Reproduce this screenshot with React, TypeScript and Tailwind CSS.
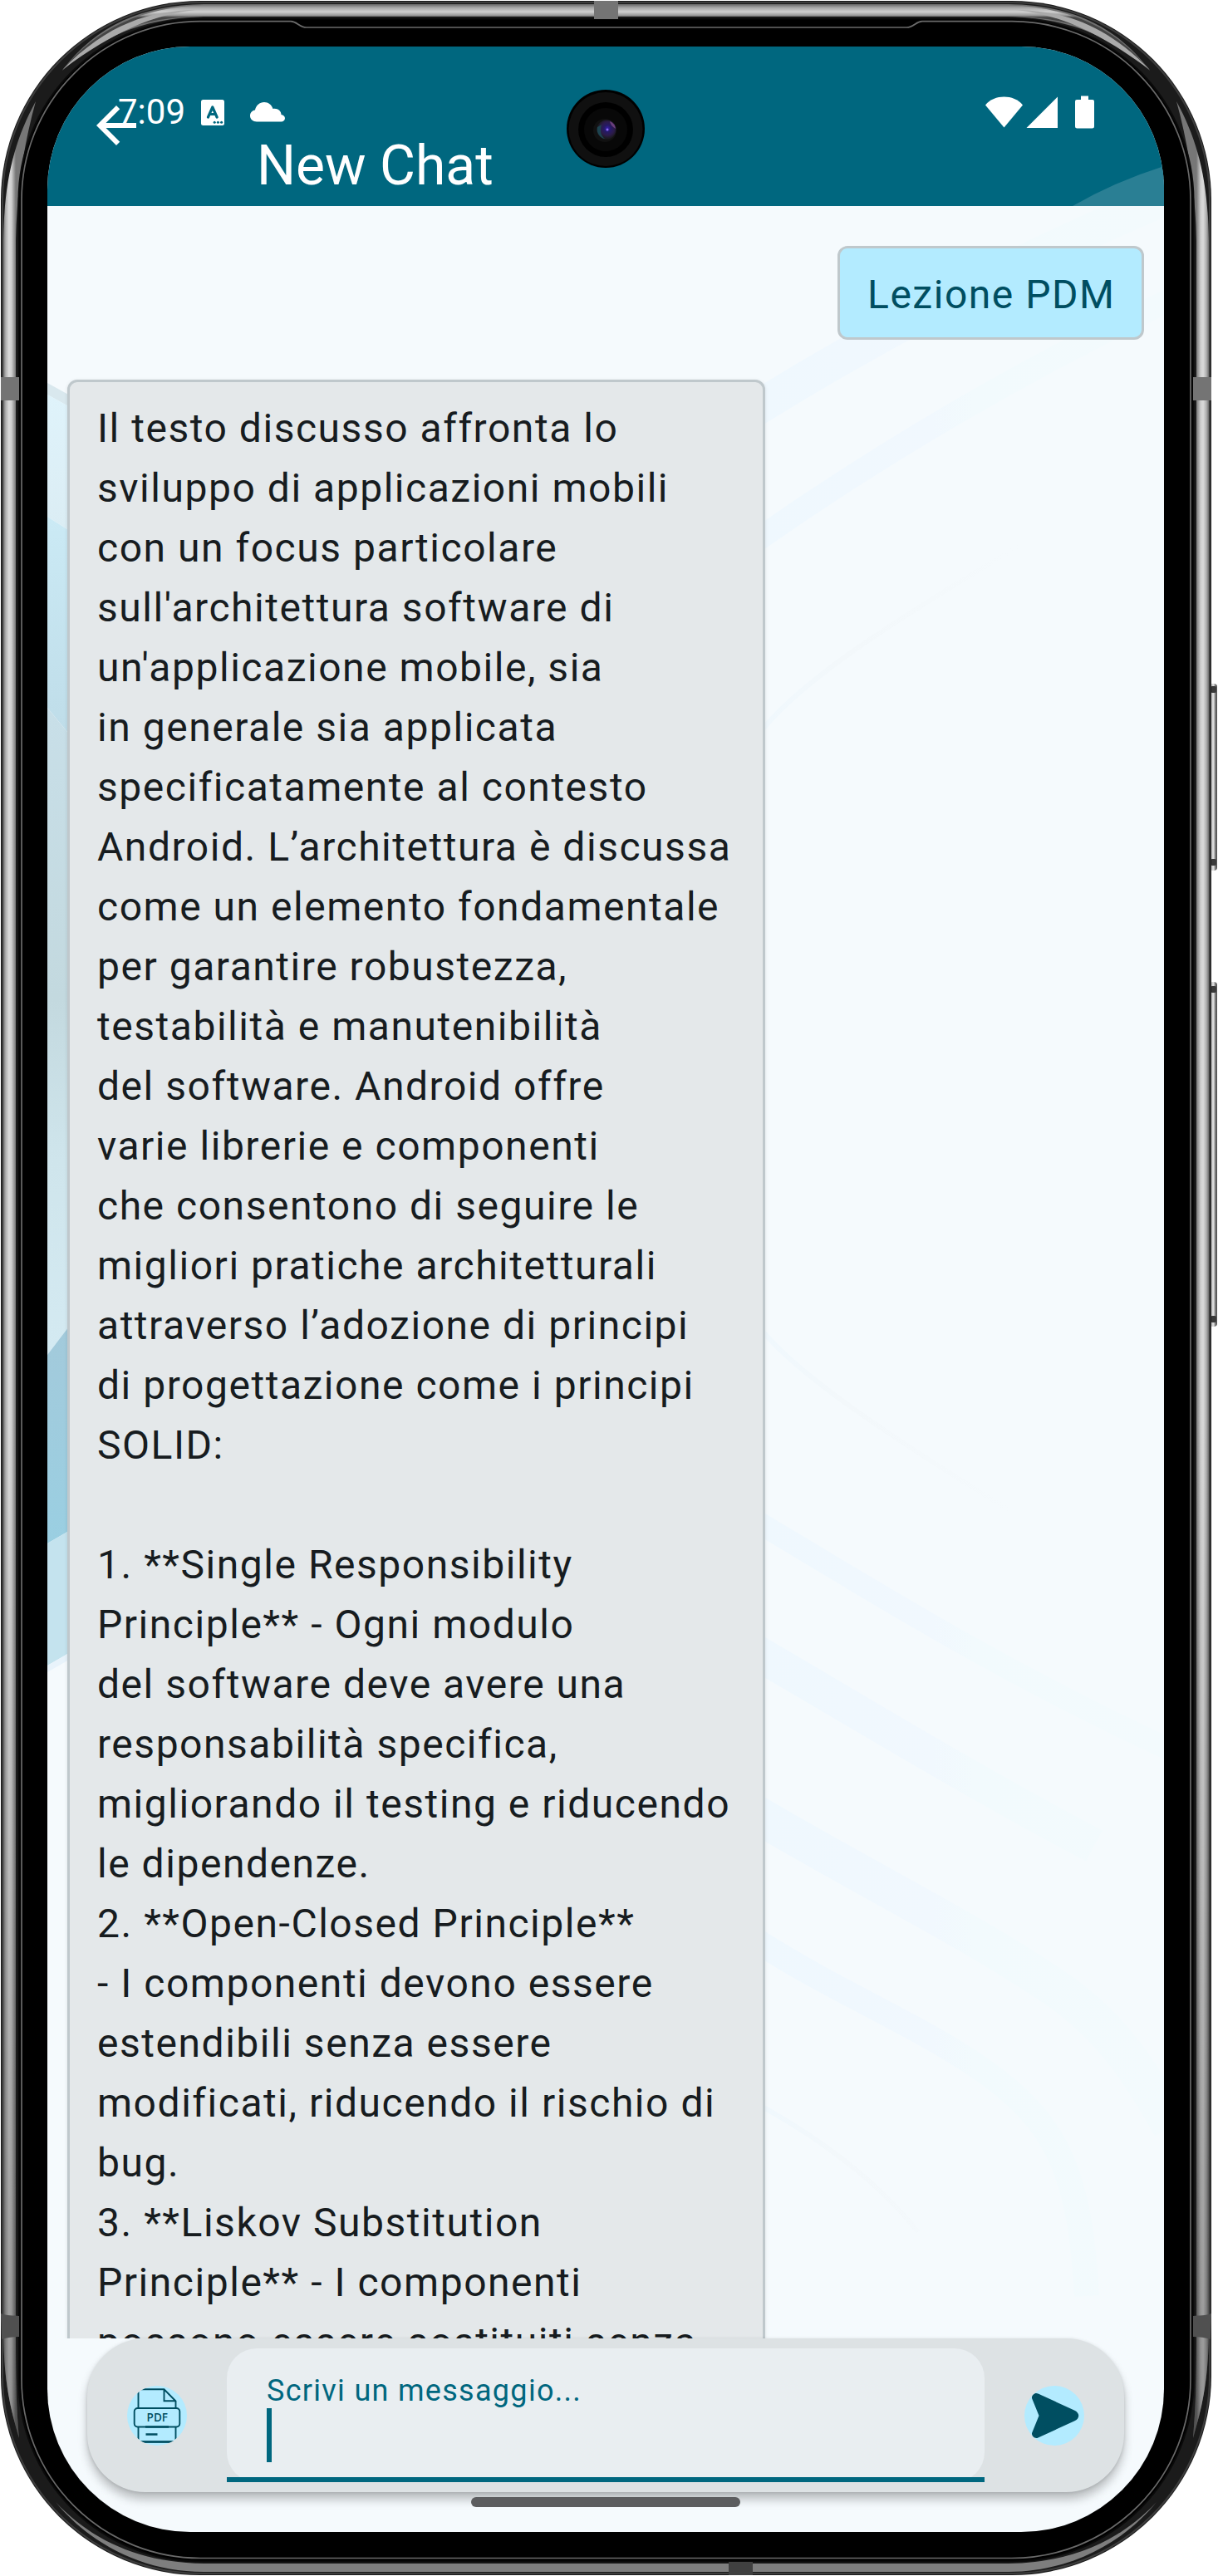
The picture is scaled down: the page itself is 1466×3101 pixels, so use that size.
import React from "react";

const lines = [
  "Il testo discusso affronta lo",
  "sviluppo di applicazioni mobili",
  "con un focus particolare",
  "sull'architettura software di",
  "un'applicazione mobile, sia",
  "in generale sia applicata",
  "specificatamente al contesto",
  "Android. L’architettura è discussa",
  "come un elemento fondamentale",
  "per garantire robustezza,",
  "testabilità e manutenibilità",
  "del software. Android offre",
  "varie librerie e componenti",
  "che consentono di seguire le",
  "migliori pratiche architetturali",
  "attraverso l’adozione di principi",
  "di progettazione come i principi",
  "SOLID:",
  "",
  "1. **Single Responsibility",
  "Principle** - Ogni modulo",
  "del software deve avere una",
  "responsabilità specifica,",
  "migliorando il testing e riducendo",
  "le dipendenze.",
  "2. **Open-Closed Principle**",
  "- I componenti devono essere",
  "estendibili senza essere",
  "modificati, riducendo il rischio di",
  "bug.",
  "3. **Liskov Substitution",
  "Principle** - I componenti",
  "possono essere sostituiti senza",
];

/* Metal body, bezel and side buttons of the handset. */
function PhoneFrame() {
  return (
    <svg className="absolute inset-0" width="1466" height="3101" viewBox="0 0 1466 3101" fill="none">
      <defs>
        <linearGradient id="button" x1="0" x2="1">
          <stop offset="0" stopColor="#b0b0b0" />
          <stop offset="0.5" stopColor="#dcdcdc" />
          <stop offset="0.75" stopColor="#8a8a8a" />
          <stop offset="0.9" stopColor="#3a3a3a" />
          <stop offset="1" stopColor="#808080" />
        </linearGradient>
        <linearGradient id="left" x1="4" x2="19" y1="0" y2="0" gradientUnits="userSpaceOnUse">
          <stop offset="0" stopColor="#6e6e6e" />
          <stop offset="0.2" stopColor="#b0b0b0" />
          <stop offset="0.45" stopColor="#dadada" />
          <stop offset="0.65" stopColor="#cfcfcf" />
          <stop offset="1" stopColor="#777" />
        </linearGradient>
        <linearGradient id="right" x1="1455" x2="1440" y1="0" y2="0" gradientUnits="userSpaceOnUse">
          <stop offset="0" stopColor="#6e6e6e" />
          <stop offset="0.2" stopColor="#b0b0b0" />
          <stop offset="0.45" stopColor="#dadada" />
          <stop offset="0.65" stopColor="#cfcfcf" />
          <stop offset="1" stopColor="#777" />
        </linearGradient>
        <linearGradient id="top" x1="0" x2="0" y1="4" y2="21" gradientUnits="userSpaceOnUse">
          <stop offset="0" stopColor="#555" />
          <stop offset="0.3" stopColor="#a5a5a5" />
          <stop offset="0.6" stopColor="#d0d0d0" />
          <stop offset="0.85" stopColor="#999" />
          <stop offset="1" stopColor="#444" />
        </linearGradient>
        <linearGradient id="shade" x1="0" x2="0" y1="1700" y2="3000" gradientUnits="userSpaceOnUse">
          <stop offset="0" stopColor="#000" stopOpacity="0" />
          <stop offset="1" stopColor="#000" stopOpacity="0.33" />
        </linearGradient>
        <filter id="soft" x="-0.05" y="-0.05" width="1.1" height="1.1">
          <feGaussianBlur stdDeviation="0.7" />
        </filter>
      </defs>

      <rect x="1456" y="823" width="9" height="225" rx="4" fill="url(#button)" />
      <rect x="1457" y="826" width="7" height="8" rx="2" fill="#3a3a3a" />
      <rect x="1457" y="1034" width="7" height="8" rx="2" fill="#3a3a3a" />
      <rect x="1456" y="1182" width="9" height="415" rx="4" fill="url(#button)" />
      <rect x="1457" y="1187" width="7" height="8" rx="2" fill="#3a3a3a" />
      <rect x="1457" y="1584" width="7" height="8" rx="2" fill="#3a3a3a" />

      <rect x="1" y="1" width="1457" height="3099" rx="240" fill="#1b1b1b" />
      <rect x="3" y="3" width="1453" height="3095" rx="238" stroke="#3d3d3d" strokeWidth="2" />

      <g filter="url(#soft)">
        <path d="M75 85C116 30 172 6 245 5H1214C1287 6 1343 30 1384 85C1340 47 1292 22 1214 20H245C167 22 119 47 75 85Z" fill="#6f6f6f" />
        <path d="M75 85C116 33 172 9 245 6H1214C1287 9 1343 33 1384 85C1340 42 1292 20 1214 20H245C167 20 119 42 75 85Z" fill="url(#top)" />
        <path d="M75 84C130 28 180 13 235 12C185 18 140 36 75 84ZM1384 84C1329 28 1279 13 1224 12C1274 18 1319 36 1384 84Z" fill="#aaa" />
        <path d="M43 122C18 168 5 215 4 290V2810C5 2870 13 2900 23 2935C20 2900 19 2870 19 2810V290C20 235 27 180 43 122Z" fill="url(#left)" />
        <path d="M1416 122C1441 168 1454 215 1455 290V2810C1454 2870 1446 2900 1436 2935C1439 2900 1440 2870 1440 2810V290C1439 235 1432 180 1416 122Z" fill="url(#right)" />
        <path d="M43 122C18 168 5 215 4 290V2810C5 2870 13 2900 23 2935C20 2900 19 2870 19 2810V290C20 235 27 180 43 122ZM1416 122C1441 168 1454 215 1455 290V2810C1454 2870 1446 2900 1436 2935C1439 2900 1440 2870 1440 2810V290C1439 235 1432 180 1416 122Z" fill="url(#shade)" />
        <path d="M67 3012C108 3062 172 3096 245 3096H1214C1287 3096 1351 3062 1392 3012C1350 3057 1292 3085 1214 3086H245C167 3085 109 3057 67 3012Z" fill="#7e7e7e" />
      </g>

      <rect x="23" y="23" width="1413" height="3061" rx="218" fill="#000" />
      <rect x="22.5" y="22.5" width="1414" height="3061" rx="218.5" stroke="#0a0a0a" strokeWidth="2" />
      <path
        d="M241 25.7H350C358 26 360 33 369 33H1091C1100 33 1102 26 1110 25.7H1218A215 215 0 0 1 1433 241V2864A215 215 0 0 1 1218 3079.5H241A215 215 0 0 1 26 2864V241A215 215 0 0 1 241 25.7Z"
        stroke="#6a6a6a"
        strokeWidth="1.7"
      />

      <path d="M1 454H23V482H1ZM1436 454H1458V482H1436Z" fill="#747474" />
      <path d="M1 2785C8 2788 16 2787 23 2788V2813C16 2813 8 2814 2 2816ZM1458 2785C1451 2788 1443 2787 1436 2788V2813C1443 2813 1451 2814 1457 2816Z" fill="#505050" />
      <path d="M715 1H744V23H715Z" fill="#747474" />
      <path d="M877 3084H906V3100H877Z" fill="#404040" />
    </svg>
  );
}

/* Decorative wallpaper behind the conversation. */
function Wallpaper() {
  return (
    <svg className="absolute inset-0" width="1344" height="2992" viewBox="57 56 1344 2992" fill="none">
      <defs>
        <linearGradient id="w1" x1="0" x2="0" y1="475" y2="637" gradientUnits="userSpaceOnUse">
          <stop stopColor="#dff3fb" />
          <stop offset="1" stopColor="#dbedf4" />
        </linearGradient>
        <linearGradient id="w2" x1="0" x2="0" y1="622" y2="880" gradientUnits="userSpaceOnUse">
          <stop stopColor="#cbeaf5" />
          <stop offset="1" stopColor="#bfdde9" />
        </linearGradient>
        <linearGradient id="w3" x1="0" x2="0" y1="852" y2="1630" gradientUnits="userSpaceOnUse">
          <stop stopColor="#c8dfe8" />
          <stop offset="0.45" stopColor="#c3d9df" />
          <stop offset="0.7" stopColor="#cfe5ec" />
          <stop offset="1" stopColor="#d4eaf2" />
        </linearGradient>
        <linearGradient id="w4" x1="0" x2="0" y1="1600" y2="1858" gradientUnits="userSpaceOnUse">
          <stop stopColor="#a3cadb" />
          <stop offset="1" stopColor="#9acfe2" />
        </linearGradient>
        <linearGradient id="fade" x1="921" x2="1401" y1="0" y2="0" gradientUnits="userSpaceOnUse">
          <stop stopColor="#eff8fe" />
          <stop offset="0.42" stopColor="#f1f8fe" />
          <stop offset="0.52" stopColor="#f2fafd" />
          <stop offset="1" stopColor="#f3fafd" />
        </linearGradient>
        <linearGradient id="thin" x1="921" x2="1230" y1="0" y2="0" gradientUnits="userSpaceOnUse">
          <stop stopColor="#f0f8fd" />
          <stop offset="0.3" stopColor="#f3f8fb" />
          <stop offset="1" stopColor="#f5fafd" />
        </linearGradient>
      </defs>
      <path d="M57 461L95 482V496L57 475Z" fill="#d9e8ee" />
      <path d="M57 475L95 496V646L57 622Z" fill="url(#w1)" />
      <path d="M57 622L95 646V898L57 852Z" fill="url(#w2)" />
      <path d="M57 852L95 898V1581L57 1631Z" fill="url(#w3)" />
      <path d="M57 1631L95 1581V1836L57 1858Z" fill="url(#w4)" />
      <path d="M57 1858L95 1836V1983L57 2005Z" fill="#c4e3ee" />
      <path d="M57 2005L95 1983V1991L57 2013Z" fill="#e8f3fb" />
      <g stroke="url(#fade)">
        <path d="M910 492C1050 405 1200 325 1410 235" strokeWidth="42" />
        <path d="M910 651C1040 560 1200 460 1410 360" strokeWidth="28" />
        <path d="M910 1831C1050 1915 1210 2015 1410 2107" strokeWidth="27" />
        <path d="M910 1989C1040 2065 1180 2150 1317 2222" strokeWidth="42" />
        <path d="M910 2184C1060 2272 1180 2330 1280 2400C1340 2445 1370 2490 1410 2560" strokeWidth="46" />
        <path d="M910 2336C1010 2400 1100 2435 1180 2490C1275 2555 1300 2620 1308 2764" strokeWidth="30" />
      </g>
      <g stroke="url(#thin)" strokeWidth="6">
        <path d="M910 888C960 820 1080 745 1230 655" />
        <path d="M910 1592C950 1650 1080 1735 1215 1818" />
        <path d="M910 2532C990 2575 1060 2630 1105 2687" />
      </g>
    </svg>
  );
}

function Camera() {
  return (
    <svg className="absolute left-[625px] top-[52px]" width="94" height="94" viewBox="0 0 94 94">
      <defs>
        <radialGradient id="lens" cx="0.55" cy="0.45" r="0.5">
          <stop offset="0" stopColor="#3a1fb0" />
          <stop offset="0.35" stopColor="#251a66" />
          <stop offset="0.7" stopColor="#2c1b4a" />
          <stop offset="1" stopColor="#1b1a22" />
        </radialGradient>
      </defs>
      <circle cx="47" cy="47" r="47" fill="#000" />
      <circle cx="47" cy="47.500" r="44.500" fill="#101010" />
      <circle cx="47" cy="48" r="33" fill="#000" />
      <circle cx="47" cy="48" r="26" fill="#080808" />
      <circle cx="46" cy="49" r="14" fill="#111" />
      <circle cx="48" cy="48" r="11.500" fill="url(#lens)" />
      <path d="M37 45A11.500 11.500 0 0 0 46 59C41 55 40 50 42 42Z" fill="#1d4450" />
      <path d="M52 38A11.500 11.500 0 0 1 59 47C56 45 53 43 52 38Z" fill="#6b3f7c" />
      <circle cx="49" cy="48" r="1.500" fill="#8a6cf0" />
    </svg>
  );
}

function StatusBar() {
  return (
    <div className="absolute left-[85px] right-[83px] top-[56px] flex h-[46px] items-center justify-between text-white">
      <div className="flex items-center">
        <span className="w-[100px] text-[42px] leading-[42px]">7:09</span>
        <svg width="28" height="31" viewBox="0 0 28 31" className="mt-[1px]">
          <rect width="28" height="31" rx="2.500" fill="#fff" />
          <path d="M8.500 21L13.800 9L19.100 21M10.500 17.500H17" fill="none" stroke="#00677f" strokeWidth="3.200" strokeLinecap="round" strokeLinejoin="round" />
          <circle cx="16.200" cy="27.300" r="1.500" fill="#00677f" />
          <circle cx="20.400" cy="27.300" r="1.500" fill="#00677f" />
          <circle cx="24.600" cy="27.300" r="1.500" fill="#00677f" />
        </svg>
        <svg width="42" height="24" viewBox="0 0 42 24" className="ml-[31px]">
          <path d="M8 23.500C3.500 23.500 0 20.500 0 16.500C0 12.500 2.500 10 6 9.500C7 4 11.500 0 17 0C22 0 26 3 27.500 8C33 7 37.500 10.500 37.500 15C40 15.300 42 17 42 19.300C42 21.700 40 23.500 37.500 23.500Z" fill="#fff" />
        </svg>
      </div>
      <svg width="132" height="40" viewBox="0 0 132 40" fill="#fff">
        <path d="M0 11.500C5.500 4.500 14 1.500 22.500 1.500C31 1.500 39.500 4.500 45 11.500L22.500 38.500Z" />
        <path d="M87 1.500V39H49.500Z" />
        <path d="M115 0.500H124V5H129Q131 5 131 7V37Q131 39.500 128.500 39.500H110.500Q108 39.500 108 37V7Q108 5 110 5H115Z" />
      </svg>
    </div>
  );
}

function Header() {
  return (
    <header className="relative h-[192px] shrink-0 bg-[#00677f] text-white">
      <svg className="absolute bottom-0 right-0" width="110" height="48" viewBox="0 0 110 48">
        <path d="M0 48Q50 19 110 0V48Z" fill="#2a7f94" />
      </svg>
      <StatusBar />
      <div className="flex items-start">
        <svg className="ml-[47px] mt-[59px]" width="72" height="72" viewBox="0 0 24 24" fill="#fff">
          <path d="M20 11H7.830l5.590-5.590L12 4l-8 8 8 8 1.410-1.410L7.830 13H20z" />
        </svg>
        <h1 className="ml-[133px] mt-[111px] text-[66px] font-normal leading-[66px]">New Chat</h1>
      </div>
      <Camera />
    </header>
  );
}

function Composer() {
  return (
    <footer className="relative mx-[48px] flex h-[185px] shrink-0 items-start rounded-[70px] bg-[#dde2e4] shadow-[0_9px_12px_rgba(0,0,0,0.24),0_1px_4px_rgba(0,0,0,0.12)]">
      <svg className="ml-[48px] mt-[57px]" width="72" height="72" viewBox="0 0 72 72" fill="none" stroke="#004e61" strokeWidth="1.900">
        <clipPath id="disc">
          <circle cx="36" cy="36" r="36" />
        </clipPath>
        <circle cx="36" cy="36" r="36" fill="#b3ebff" stroke="none" />
        <g clipPath="url(#disc)">
          <path d="M13.500 27V4.300H44.500L58.500 18.500V27M44.500 4.300V18.300H58.500M13.500 49.300V67.500H58.500V49.300" />
          <rect x="8.700" y="27" width="54.600" height="22.500" rx="4" />
          <path d="M22 49.500H50M22.500 58.500H36.500" strokeWidth="2.500" />
          <path d="M16 67.500H56" strokeWidth="2.500" />
        </g>
        <text x="36.300" y="42.800" fill="#004e61" stroke="none" fontSize="13.500" fontFamily="Open Sans, sans-serif" fontWeight="600" textAnchor="middle">PDF</text>
      </svg>
      <div className="ml-[48px] mt-[12px] h-[161px] w-[912px]">
        <div className="h-[161px] rounded-[36px] bg-[#e9eef1] pl-[48px] pt-[33px]">
          <div className="text-[36px] leading-[36px] tracking-[1.3px] text-[#00677f]">Scrivi un messaggio...</div>
          <div className="mt-[3px] h-[65px] w-[6px] bg-[#00677f]" />
        </div>
        <div className="-mt-[6px] h-[6px] bg-[#00677f]" />
      </div>
      <svg className="ml-[48px] mt-[57px]" width="72" height="72" viewBox="0 0 72 72">
        <circle cx="36" cy="36" r="36" fill="#b3ebff" />
        <path d="M9 15C8.500 11 13 7.500 16.500 9.500L60 29.500C67 32.500 67 39.500 60 42.500L16.500 62.500C13 64.500 8.500 61 9 57L17.500 36Z" fill="#004e61" />
      </svg>
    </footer>
  );
}

export default function App() {
  return (
    <div
      className="relative h-[3101px] w-[1466px] overflow-hidden bg-white pl-[57px] pt-[56px] font-[Roboto,sans-serif]"
    >
      <PhoneFrame />
      <main className="relative flex h-[2992px] w-[1344px] flex-col overflow-hidden rounded-[172px] bg-[#f5fafd]">
        <Wallpaper />
        <Header />
        <section className="relative flex h-[2567px] shrink-0 flex-col overflow-hidden pl-[24px] pr-[24px] pt-[48px] text-[48px] leading-[72px] tracking-[1.53px]">
          <div className="h-[113px] w-[369px] shrink-0 self-end whitespace-nowrap rounded-[12px] border-[3px] border-[#bfc8cc] bg-[#b3ebff] pl-[33px] pt-[20px] text-[#004e61]">
            Lezione PDM
          </div>
          <div className="mt-[48px] w-[840px] shrink-0 self-start whitespace-pre rounded-[12px] border-[3px] border-[#bfc8cc] bg-[#e4e8ea] pl-[33px] pt-[20px] text-[#171c1f] shadow-[0_1px_4px_rgba(0,0,0,0.1)]">
            {lines.map((line, i) => (
              <p key={i} className="h-[72px]">
                {line}
              </p>
            ))}
          </div>
        </section>
        <Composer />
        <div className="relative ml-[510px] mt-[6px] h-[12px] w-[324px] shrink-0 rounded-[6px] bg-[#5c5d5f]" />
      </main>
    </div>
  );
}
